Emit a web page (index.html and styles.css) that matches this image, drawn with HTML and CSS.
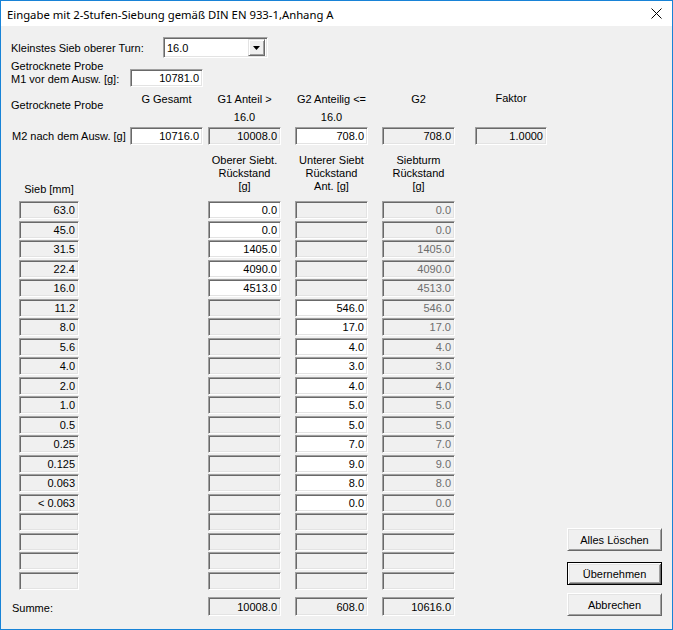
FILE: index.html
```html
<!DOCTYPE html>
<html lang="de">
<head>
<meta charset="utf-8">
<title>Eingabe mit 2-Stufen-Siebung</title>
<link rel="stylesheet" href="styles.css">
</head>
<body>
<div class="window">
  <div class="titlebar">
    <span class="title">Eingabe mit 2-Stufen-Siebung gemäß DIN EN 933-1,Anhang A</span>
    <svg class="close" width="11" height="11" viewBox="0 0 11 11"><path d="M0.5 0.5 L10.5 10.5 M10.5 0.5 L0.5 10.5" stroke="#000" stroke-width="1" fill="none"/></svg>
  </div>
  <div class="client">
    <div class="row-combo">
      <span class="lbl-combo">Kleinstes Sieb oberer Turn:</span>
      <div class="combo">
        <span class="combo-val">16.0</span>
        <span class="combo-btn"><svg width="7" height="4" viewBox="0 0 7 4"><path d="M0 0 H7 L3.5 4 Z" fill="#000"/></svg></span>
      </div>
    </div>
    <div class="row-m1">
      <span class="lbl-m1">Getrocknete Probe<br>M1 vor dem Ausw. [g]:</span>
      <span class="box edit">10781.0</span>
    </div>

    <div class="sheet">
      <!-- headers above the M2 row -->
      <span class="lbl-left head-probe">Getrocknete Probe</span>
      <span class="colhead c-ges">G Gesamt</span>
      <span class="colhead c-ob">G1 Anteil &gt;<br>16.0</span>
      <span class="colhead c-un">G2 Anteilig &lt;=<br>16.0</span>
      <span class="colhead c-st">G2</span>
      <span class="colhead c-fa">Faktor</span>

      <!-- M2 row -->
      <span class="lbl-left lbl-m2">M2 nach dem Ausw. [g]</span>
      <span class="box edit c-ges">10716.0</span>
      <span class="box ro c-ob">10008.0</span>
      <span class="box edit c-un">708.0</span>
      <span class="box ro c-st">708.0</span>
      <span class="box ro c-fa">1.0000</span>

      <!-- column headers of the table -->
      <span class="tablehead c-sieb one">Sieb [mm]</span>
      <span class="tablehead c-ob">Oberer Siebt.<br>Rückstand<br>[g]</span>
      <span class="tablehead c-un">Unterer Siebt<br>Rückstand<br>Ant. [g]</span>
      <span class="tablehead c-st">Siebturm<br>Rückstand<br>[g]</span>

      <span class="box ro c-sieb">63.0</span><span class="box edit c-ob">0.0</span><span class="box ro c-un"></span><span class="box ro dis c-st">0.0</span>
      <span class="box ro c-sieb">45.0</span><span class="box edit c-ob">0.0</span><span class="box ro c-un"></span><span class="box ro dis c-st">0.0</span>
      <span class="box ro c-sieb">31.5</span><span class="box edit c-ob">1405.0</span><span class="box ro c-un"></span><span class="box ro dis c-st">1405.0</span>
      <span class="box ro c-sieb">22.4</span><span class="box edit c-ob">4090.0</span><span class="box ro c-un"></span><span class="box ro dis c-st">4090.0</span>
      <span class="box ro c-sieb">16.0</span><span class="box edit c-ob">4513.0</span><span class="box ro c-un"></span><span class="box ro dis c-st">4513.0</span>
      <span class="box ro c-sieb">11.2</span><span class="box ro c-ob"></span><span class="box edit c-un">546.0</span><span class="box ro dis c-st">546.0</span>
      <span class="box ro c-sieb">8.0</span><span class="box ro c-ob"></span><span class="box edit c-un">17.0</span><span class="box ro dis c-st">17.0</span>
      <span class="box ro c-sieb">5.6</span><span class="box ro c-ob"></span><span class="box edit c-un">4.0</span><span class="box ro dis c-st">4.0</span>
      <span class="box ro c-sieb">4.0</span><span class="box ro c-ob"></span><span class="box edit c-un">3.0</span><span class="box ro dis c-st">3.0</span>
      <span class="box ro c-sieb">2.0</span><span class="box ro c-ob"></span><span class="box edit c-un">4.0</span><span class="box ro dis c-st">4.0</span>
      <span class="box ro c-sieb">1.0</span><span class="box ro c-ob"></span><span class="box edit c-un">5.0</span><span class="box ro dis c-st">5.0</span>
      <span class="box ro c-sieb">0.5</span><span class="box ro c-ob"></span><span class="box edit c-un">5.0</span><span class="box ro dis c-st">5.0</span>
      <span class="box ro c-sieb">0.25</span><span class="box ro c-ob"></span><span class="box edit c-un">7.0</span><span class="box ro dis c-st">7.0</span>
      <span class="box ro c-sieb">0.125</span><span class="box ro c-ob"></span><span class="box edit c-un">9.0</span><span class="box ro dis c-st">9.0</span>
      <span class="box ro c-sieb">0.063</span><span class="box ro c-ob"></span><span class="box edit c-un">8.0</span><span class="box ro dis c-st">8.0</span>
      <span class="box ro c-sieb">&lt; 0.063</span><span class="box ro c-ob"></span><span class="box edit c-un">0.0</span><span class="box ro dis c-st">0.0</span>
      <span class="box ro c-sieb"></span><span class="box ro c-ob"></span><span class="box ro c-un"></span><span class="box ro c-st"></span>
      <span class="box ro c-sieb"></span><span class="box ro c-ob"></span><span class="box ro c-un"></span><span class="box ro c-st"></span>
      <span class="box ro c-sieb"></span><span class="box ro c-ob"></span><span class="box ro c-un"></span><span class="box ro c-st"></span>
      <span class="box ro c-sieb"></span><span class="box ro c-ob"></span><span class="box ro c-un"></span><span class="box ro c-st"></span>

      <!-- totals -->
      <span class="lbl-left sum-row lbl-sum">Summe:</span>
      <span class="box ro sum-row c-ob">10008.0</span>
      <span class="box ro sum-row c-un">608.0</span>
      <span class="box ro sum-row c-st">10616.0</span>

      <div class="buttons">
        <button class="btn btn-clear">Alles Löschen</button>
        <button class="btn btn-default">Übernehmen</button>
        <button class="btn btn-cancel">Abbrechen</button>
      </div>
    </div>
  </div>
</div>
</body>
</html>
```

FILE: styles.css
```css
html, body {
  margin: 0;
  padding: 0;
  background: #f0f0f0;
}

.window {
  width: 673px;
  height: 630px;
  box-sizing: border-box;
  border: 1px solid #1883d7;
  background: #f0f0f0;
  font-family: "Liberation Sans", Arial, sans-serif;
  font-size: 11px;
  color: #000;
  overflow: hidden;
}

/* title bar */
.titlebar {
  height: 25px;
  background: #fff;
  display: flex;
  align-items: center;
  justify-content: space-between;
  padding: 0 10px 0 6px;
}
.title {
  font-family: "Noto Sans", "Open Sans", sans-serif;
  font-size: 11.3px;
  color: #000;
  margin-top: 1px;
}
.close {
  display: block;
}

.client {
  padding: 11px 0 0 0;
}

/* first rows: combo and M1 */
.row-combo {
  display: flex;
  align-items: center;
  padding-left: 10px;
  height: 21px;
}
.lbl-combo {
  width: 152px;
}
.combo {
  width: 105px;
  height: 21px;
  box-sizing: border-box;
  background: #fff;
  border: 1px solid;
  border-color: #a0a0a0 #fff #fff #a0a0a0;
  box-shadow: inset 1px 1px 0 #696969, inset -1px -1px 0 #e3e3e3;
  display: flex;
  align-items: center;
  justify-content: space-between;
  padding: 1px 2px 1px 3px;
}
.combo-btn {
  width: 17px;
  height: 17px;
  box-sizing: border-box;
  background: #f0f0f0;
  border: 1px solid;
  border-color: #e3e3e3 #696969 #696969 #e3e3e3;
  box-shadow: inset 1px 1px 0 #fff, inset -1px -1px 0 #a0a0a0;
  display: flex;
  align-items: center;
  justify-content: center;
}
.combo-btn svg {
  display: block;
}

.row-m1 {
  display: flex;
  align-items: flex-end;
  padding-left: 10px;
  margin-top: 2px;
}
.lbl-m1 {
  width: 119px;
  line-height: 13px;
  margin-bottom: 1px;
}

/* text boxes */
.box {
  display: block;
  box-sizing: border-box;
  height: 18px;
  width: 73px;
  line-height: 17px;
  text-align: right;
  padding-right: 3px;
  border: 1px solid;
  border-color: #a0a0a0 #fff #fff #a0a0a0;
  box-shadow: inset 1px 1px 0 #696969, inset -1px -1px 0 #e3e3e3;
  white-space: nowrap;
  overflow: hidden;
}
.edit { background: #fff; }
.ro { background: #f0f0f0; }
.dis { color: #6d6d6d; }

/* main sheet grid */
.sheet {
  display: grid;
  margin-top: 3px;
  grid-template-columns: 18px 60px 51px 73px 5px 73px 14px 73px 14px 73px 20px 72px 20px 95px;
  grid-template-rows: 37px 18px 56px repeat(20, 19.5px) 6px 19px;
  align-items: start;
}

.c-sieb { grid-column: 2; width: 60px; }
.c-ges  { grid-column: 4; }
.c-ob   { grid-column: 6; }
.c-un   { grid-column: 8; }
.c-st   { grid-column: 10; }
.c-fa   { grid-column: 12; width: 72px; }

.lbl-left {
  grid-column: 1 / 4;
  padding-left: 10px;
}
.head-probe {
  line-height: 18px;
  padding-top: 6px;
}
.lbl-m2 {
  padding-left: 11px;
  line-height: 19px;
}
.lbl-sum {
  padding-left: 11px;
  line-height: 22px;
}

.colhead {
  text-align: center;
  line-height: 18px;
}
.c-fa.colhead { margin-top: -1px; }

.tablehead {
  text-align: center;
  line-height: 13px;
  align-self: end;
  margin-bottom: 8px;
}
.tablehead.one { margin-bottom: 5px; }

.sum-row { grid-row: 25; }
.box.sum-row { height: 19px; line-height: 19px; }

/* push buttons */
.buttons {
  grid-column: 14;
  grid-row: 4 / 26;
  align-self: end;
  display: flex;
  flex-direction: column;
}
.btn {
  font-family: inherit;
  font-size: 11px;
  color: #000;
  width: 95px;
  height: 23px;
  padding: 0;
  margin: 0;
  background: #f0f0f0;
  border: 1px solid;
  border-color: #fff #696969 #696969 #fff;
  box-shadow: inset 1px 1px 0 #e3e3e3, inset -1px -1px 0 #a0a0a0;
  border-radius: 0;
}
.btn-default {
  margin-top: 11px;
  border-color: #000;
  box-shadow: inset 1px 1px 0 #fff, inset -1px -1px 0 #696969, inset 2px 2px 0 #e3e3e3, inset -2px -2px 0 #a0a0a0;
}
.btn-cancel {
  margin-top: 8px;
}
```
